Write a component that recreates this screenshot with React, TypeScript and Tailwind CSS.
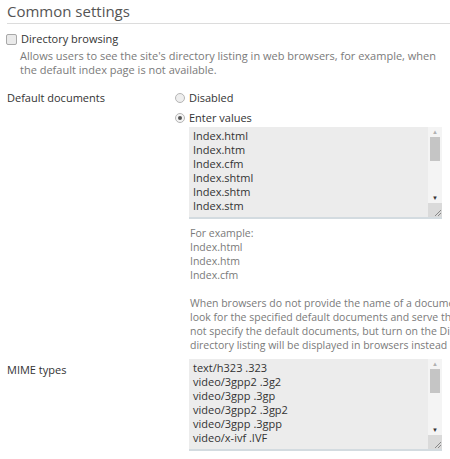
const docs = ["Index.html", "Index.htm", "Index.cfm", "Index.shtml", "Index.shtm", "Index.stm"];
const mimes = ["text/h323 .323", "video/3gpp2 .3g2", "video/3gpp .3gp", "video/3gpp2 .3gp2", "video/3gpp .3gpp", "video/x-ivf .IVF"];

const ListBox = ({ items }: { items: string[] }) => {
  return (
    <div className="flex shrink-0 w-[253px] h-[92px] bg-[#ececec] border-b-2 border-[#d3dbe0]">
      <div className="flex-1 overflow-hidden pl-[4px] pt-[2px] text-[11px] leading-[14px] text-[#333333]">
        {items.map((t) => (
          <div key={t}>{t}</div>
        ))}
      </div>
      <div className="flex flex-col w-[14px] bg-[#f4f4f4]">
        <div className="h-[10px] flex items-center justify-center text-[6px] leading-none text-[#b0b0b0]">▲</div>
        <div className="mx-[2px] h-[24px] bg-[#c5c5c5]"></div>
        <div className="flex-1"></div>
        <div className="h-[10px] flex items-center justify-center text-[6px] leading-none text-[#333333]">▼</div>
        <div className="h-[14px] bg-[#dadada] flex items-end justify-end">
          <svg width="10" height="10" viewBox="0 0 10 10">
            <path d="M9 3 L3 9 M9 6 L6 9" stroke="#888" strokeWidth="1" />
          </svg>
        </div>
      </div>
    </div>
  );
};

const App = () => {
  return (
    <div className="w-[450px] h-[459px] overflow-hidden bg-white font-['Open_Sans',sans-serif] text-[11px] text-[#444444]">
      <div className="ml-[7px] pt-[2px] pb-[2px] border-b border-[#dcdcdc] text-[15px] leading-[19px] text-[#555555]">
        Common settings
      </div>
      <div className="pl-[6px] pt-[8px]">
        <div className="flex items-center h-[14px]">
          <div className="w-[11px] h-[11px] border border-[#a8a8a8] rounded-[2px] bg-[#eaeaea]"></div>
          <div className="ml-[4px] text-[#333333]">Directory browsing</div>
        </div>
        <div className="pl-[14px] pt-[3px] leading-[14px] text-[#7a7a7a]">
          Allows users to see the site's directory listing in web browsers, for example, when
          <br />
          the default index page is not available.
        </div>
      </div>
      <div className="flex mt-[14px]">
        <div className="w-[175px] shrink-0 pl-[7px] leading-[14px] text-[#333333]">Default documents</div>
        <div className="min-w-0 flex-1 overflow-hidden">
          <div className="flex items-center h-[14px]">
            <div className="w-[10px] h-[10px] rounded-full border border-[#b5b5b5] bg-[#eeeeee]"></div>
            <div className="ml-[4px] text-[#333333]">Disabled</div>
          </div>
          <div className="flex items-center h-[14px] mt-[6px]">
            <div className="flex items-center justify-center w-[10px] h-[10px] rounded-full border border-[#b5b5b5] bg-[#f4f4f4]">
              <div className="w-[4px] h-[4px] rounded-full bg-[#555555]"></div>
            </div>
            <div className="ml-[4px] text-[#333333]">Enter values</div>
          </div>
          <div className="ml-[14px] mt-[2px]">
            <ListBox items={docs} />
            <div className="pl-[1px] pt-[7px] text-[10.5px] leading-[14px] text-[#7a7a7a] whitespace-nowrap">
              <div>For example:</div>
              <div>Index.html</div>
              <div>Index.htm</div>
              <div>Index.cfm</div>
              <div className="mt-[14px]">When browsers do not provide the name of a document, the server will</div>
              <div>look for the specified default documents and serve the first one found. If you do</div>
              <div>not specify the default documents, but turn on the Directory browsing option, the</div>
              <div>directory listing will be displayed in browsers instead of the default document.</div>
            </div>
          </div>
        </div>
      </div>
      <div className="flex mt-[7px]">
        <div className="w-[189px] shrink-0 pl-[7px] pt-[4px] leading-[14px] text-[#333333]">MIME types</div>
        <ListBox items={mimes} />
      </div>
    </div>
  );
};

export default App;
